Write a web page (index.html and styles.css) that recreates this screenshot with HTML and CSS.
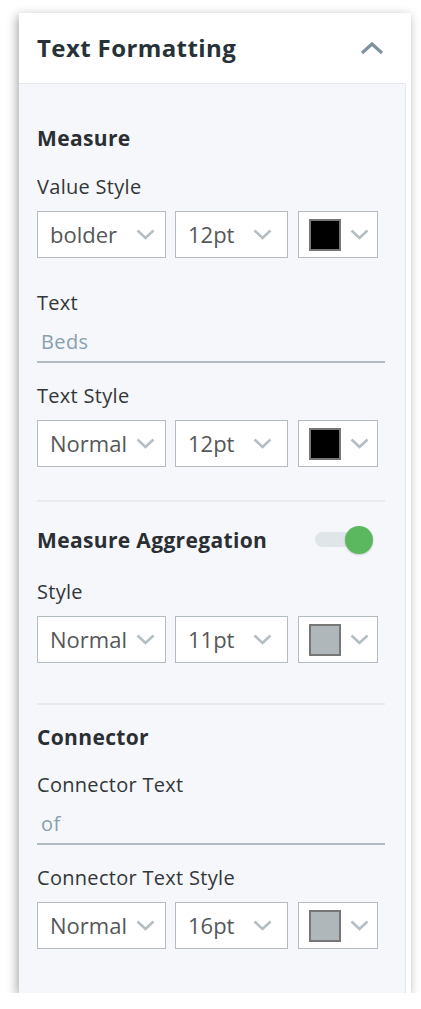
FILE: index.html
```html
<!DOCTYPE html>
<html>
<head>
<meta charset="utf-8">
<link rel="stylesheet" href="styles.css">
</head>
<body>
<div class="card">
  <div class="header">
    <div class="title">Text Formatting</div>
    <svg class="collapse" width="24" height="14" viewBox="0 0 24 14"><path d="M2 12 L12 3 L22 12" fill="none" stroke="#7d939e" stroke-width="3.2"/></svg>
  </div>
  <div class="body">
    <div class="section first">
      <div class="heading">Measure</div>
      <div class="label">Value Style</div>
      <div class="row">
        <div class="select s-style"><span class="val">bolder</span><svg class="chev" width="19" height="11" viewBox="0 0 19 11"><path d="M1.5 1.5 L9.5 9 L17.5 1.5" fill="none" stroke="#b4bec3" stroke-width="2.6"/></svg></div>
        <div class="select s-size"><span class="val">12pt</span><svg class="chev" width="19" height="11" viewBox="0 0 19 11"><path d="M1.5 1.5 L9.5 9 L17.5 1.5" fill="none" stroke="#b4bec3" stroke-width="2.6"/></svg></div>
        <div class="select s-color"><span class="swatch black"></span><svg class="chev" width="19" height="11" viewBox="0 0 19 11"><path d="M1.5 1.5 L9.5 9 L17.5 1.5" fill="none" stroke="#b4bec3" stroke-width="2.6"/></svg></div>
      </div>
      <div class="label gap-lg">Text</div>
      <div class="input">Beds</div>
      <div class="label gap-md">Text Style</div>
      <div class="row">
        <div class="select s-style"><span class="val">Normal</span><svg class="chev" width="19" height="11" viewBox="0 0 19 11"><path d="M1.5 1.5 L9.5 9 L17.5 1.5" fill="none" stroke="#b4bec3" stroke-width="2.6"/></svg></div>
        <div class="select s-size"><span class="val">12pt</span><svg class="chev" width="19" height="11" viewBox="0 0 19 11"><path d="M1.5 1.5 L9.5 9 L17.5 1.5" fill="none" stroke="#b4bec3" stroke-width="2.6"/></svg></div>
        <div class="select s-color"><span class="swatch black"></span><svg class="chev" width="19" height="11" viewBox="0 0 19 11"><path d="M1.5 1.5 L9.5 9 L17.5 1.5" fill="none" stroke="#b4bec3" stroke-width="2.6"/></svg></div>
      </div>
    </div>
    <div class="section mid">
      <div class="heading-row">
        <div class="heading">Measure Aggregation</div>
        <div class="toggle"><span class="track"></span><span class="knob"></span></div>
      </div>
      <div class="label gap-sm">Style</div>
      <div class="row">
        <div class="select s-style"><span class="val">Normal</span><svg class="chev" width="19" height="11" viewBox="0 0 19 11"><path d="M1.5 1.5 L9.5 9 L17.5 1.5" fill="none" stroke="#b4bec3" stroke-width="2.6"/></svg></div>
        <div class="select s-size"><span class="val">11pt</span><svg class="chev" width="19" height="11" viewBox="0 0 19 11"><path d="M1.5 1.5 L9.5 9 L17.5 1.5" fill="none" stroke="#b4bec3" stroke-width="2.6"/></svg></div>
        <div class="select s-color"><span class="swatch grey"></span><svg class="chev" width="19" height="11" viewBox="0 0 19 11"><path d="M1.5 1.5 L9.5 9 L17.5 1.5" fill="none" stroke="#b4bec3" stroke-width="2.6"/></svg></div>
      </div>
    </div>
    <div class="section last">
      <div class="heading">Connector</div>
      <div class="label gap-hd">Connector Text</div>
      <div class="input">of</div>
      <div class="label gap-md">Connector Text Style</div>
      <div class="row">
        <div class="select s-style"><span class="val">Normal</span><svg class="chev" width="19" height="11" viewBox="0 0 19 11"><path d="M1.5 1.5 L9.5 9 L17.5 1.5" fill="none" stroke="#b4bec3" stroke-width="2.6"/></svg></div>
        <div class="select s-size"><span class="val">16pt</span><svg class="chev" width="19" height="11" viewBox="0 0 19 11"><path d="M1.5 1.5 L9.5 9 L17.5 1.5" fill="none" stroke="#b4bec3" stroke-width="2.6"/></svg></div>
        <div class="select s-color"><span class="swatch grey"></span><svg class="chev" width="19" height="11" viewBox="0 0 19 11"><path d="M1.5 1.5 L9.5 9 L17.5 1.5" fill="none" stroke="#b4bec3" stroke-width="2.6"/></svg></div>
      </div>
    </div>
  </div>
</div>
</body>
</html>
```

FILE: styles.css
```css
* { box-sizing: border-box; }
html, body { margin: 0; padding: 0; background: #ffffff; }
body { font-family: "Open Sans", "Noto Sans", sans-serif; }

.card {
  width: 392px;
  margin: 13px 0 0 19px;
  background: #ffffff;
  box-shadow: -2px 3px 10px rgba(0,0,0,0.35);
}

.header {
  height: 70px;
  display: flex;
  align-items: center;
  justify-content: space-between;
  padding: 0 27px 0 18px;
}
.title {
  font-size: 24px;
  line-height: 30px;
  font-weight: 700;
  color: #263238;
  letter-spacing: 0.4px;
}
.collapse { display: block; margin-top: -1px; }

.body {
  height: 910px;
  margin-right: 5px;
  background: #f5f7fa;
  border-top: 1px solid #e3e8ee;
  border-right: 1px solid #e3e8ee;
  padding: 0 20px 0 18px;
}

.section { border-top: 2px solid #e7ebef; }
.section.first { border-top: none; padding: 42px 0 33px; }
.section.mid { padding: 24px 0 40px; }
.section.last { padding: 20px 0 0; }

.heading {
  font-size: 21px;
  line-height: 24px;
  font-weight: 700;
  color: #2b2f33;
  letter-spacing: 0.35px;
}
.heading-row {
  display: flex;
  align-items: center;
  justify-content: space-between;
  height: 28px;
}

.label {
  font-size: 20px;
  line-height: 24px;
  color: #333638;
  letter-spacing: 0.3px;
  margin-top: 25px;
  margin-bottom: 12px;
}
.label.gap-lg { margin-top: 33px; margin-bottom: 11px; }
.label.gap-md { margin-top: 21px; }
.label.gap-sm { margin-top: 26px; }
.label.gap-hd { margin-top: 24px; margin-bottom: 11px; }

.input {
  font-size: 20px;
  line-height: 24px;
  color: #8aa0ac;
  letter-spacing: 0.4px;
  padding: 4px 0 7px 4px;
  border-bottom: 2px solid #b0bcc2;
}

.row { display: flex; gap: 9px; }
.select {
  height: 47px;
  background: #ffffff;
  border: 1.5px solid #b3bcc0;
  display: flex;
  align-items: center;
  padding-left: 12px;
}
.select .val {
  flex: 1;
  font-size: 22px;
  line-height: 26px;
  padding-bottom: 2px;
  color: #555759;
  white-space: nowrap;
}
.select .chev { display: block; flex: none; }
.s-style { width: 129px; }
.s-style .chev { margin-right: 10px; }
.s-size { width: 113px; margin-right: 1px; }
.s-size .chev { margin-right: 15px; }
.s-color { width: 80px; padding-left: 10px; }
.s-color .chev { margin-left: 9px; }

.swatch {
  display: block;
  width: 32px;
  height: 32px;
  border: 2px solid #767676;
}
.swatch.black { background: #000000; }
.swatch.grey { background: #b0b7bb; }

.toggle {
  position: relative;
  width: 58px;
  height: 28px;
  margin-right: 12px;
}
.track {
  position: absolute;
  left: 0;
  top: 6px;
  width: 44px;
  height: 15px;
  border-radius: 8px;
  background: #dfe5e8;
}
.knob {
  position: absolute;
  right: 0;
  top: 0;
  width: 28px;
  height: 28px;
  border-radius: 50%;
  background: #5cb85f;
  box-shadow: 0 1px 2px rgba(0,0,0,0.2);
}
```
